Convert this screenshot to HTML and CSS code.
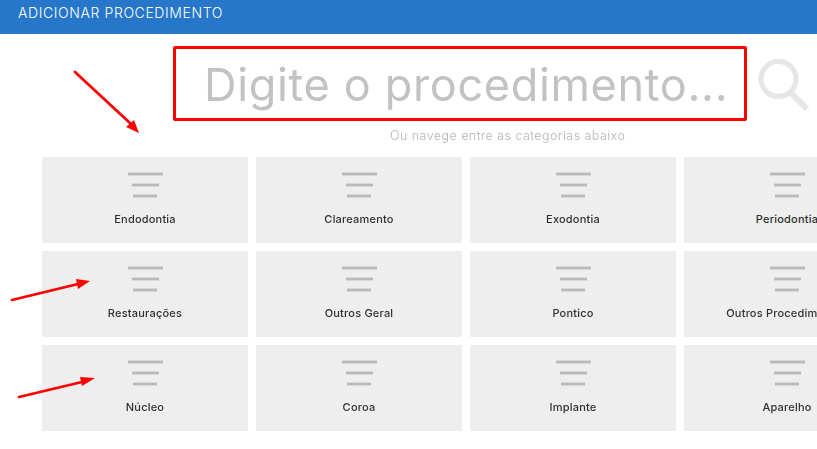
FILE: index.html
```html
<!DOCTYPE html>
<html lang="pt">
<head>
<meta charset="utf-8">
<title>Adicionar procedimento</title>
<link rel="stylesheet" href="styles.css">
</head>
<body>
<header class="topbar">ADICIONAR PROCEDIMENTO</header>
<main class="content">
  <div class="search-row">
    <div class="search-box">Digite o procedimento...</div>
    <svg class="search-icon" width="54" height="54" viewBox="0 0 54 54" fill="none" stroke="#e6e6e6">
      <circle cx="21.5" cy="20" r="17.5" stroke-width="5"/>
      <path d="M33 33 L50 50" stroke-width="6"/>
    </svg>
  </div>
  <p class="hint">Ou navege entre as categorias abaixo</p>
  <div class="grid">
    <div class="card"><span class="lines"><i class="l1"></i><i class="l2"></i><i class="l3"></i></span><span class="label">Endodontia</span></div>
    <div class="card"><span class="lines"><i class="l1"></i><i class="l2"></i><i class="l3"></i></span><span class="label">Clareamento</span></div>
    <div class="card"><span class="lines"><i class="l1"></i><i class="l2"></i><i class="l3"></i></span><span class="label">Exodontia</span></div>
    <div class="card"><span class="lines"><i class="l1"></i><i class="l2"></i><i class="l3"></i></span><span class="label">Periodontia</span></div>
    <div class="card"><span class="lines"><i class="l1"></i><i class="l2"></i><i class="l3"></i></span><span class="label">Restaurações</span></div>
    <div class="card"><span class="lines"><i class="l1"></i><i class="l2"></i><i class="l3"></i></span><span class="label">Outros Geral</span></div>
    <div class="card"><span class="lines"><i class="l1"></i><i class="l2"></i><i class="l3"></i></span><span class="label">Pontico</span></div>
    <div class="card"><span class="lines"><i class="l1"></i><i class="l2"></i><i class="l3"></i></span><span class="label">Outros Procedimentos</span></div>
    <div class="card"><span class="lines"><i class="l1"></i><i class="l2"></i><i class="l3"></i></span><span class="label">Núcleo</span></div>
    <div class="card"><span class="lines"><i class="l1"></i><i class="l2"></i><i class="l3"></i></span><span class="label">Coroa</span></div>
    <div class="card"><span class="lines"><i class="l1"></i><i class="l2"></i><i class="l3"></i></span><span class="label">Implante</span></div>
    <div class="card"><span class="lines"><i class="l1"></i><i class="l2"></i><i class="l3"></i></span><span class="label">Aparelho</span></div>
  </div>
</main>
<svg class="arrows" width="817" height="449" viewBox="0 0 817 449" fill="#ff0000" stroke="none">
  <path d="M75 72 L131 124" stroke="#ff0000" stroke-width="2.8" stroke-linecap="round"/>
  <path d="M139 133 L126 127 L134 120 Z"/>
  <path d="M12 300 L78 284" stroke="#ff0000" stroke-width="2.8" stroke-linecap="round"/>
  <path d="M90 281 L76 279 L78 289 Z"/>
  <path d="M19 397 L82 382" stroke="#ff0000" stroke-width="2.8" stroke-linecap="round"/>
  <path d="M95 378 L80 377 L82 386 Z"/>
</svg>
</body>
</html>
```

FILE: styles.css
```css
html, body {
  margin: 0;
  padding: 0;
  width: 817px;
  height: 449px;
  overflow: hidden;
  background: #ffffff;
}

body {
  position: relative;
  font-family: "Inter", "Liberation Sans", sans-serif;
}

.topbar {
  height: 34px;
  box-sizing: border-box;
  padding: 4px 0 0 18px;
  background: #2676c9;
  color: #ffffff;
  font-family: "Inter", sans-serif;
  font-weight: 300;
  font-size: 14px;
  line-height: 17px;
  letter-spacing: 0.6px;
}

.content {
  padding-top: 12px;
  will-change: opacity;
}

.search-row {
  display: flex;
  align-items: flex-start;
  padding-left: 173px;
}

.search-box {
  box-sizing: border-box;
  width: 574px;
  height: 75px;
  padding: 9px 0 0 28px;
  border: 3px solid #ff0000;
  border-radius: 2px;
  color: #c2c2c2;
  font-family: "Inter", sans-serif;
  font-weight: 400;
  font-size: 45px;
  line-height: 54px;
  letter-spacing: 0.67px;
  white-space: nowrap;
}

.search-icon {
  margin: 13px 0 0 10px;
  flex: none;
}

.hint {
  margin: 7px 0 0;
  padding-left: 390px;
  color: #b4b4b4;
  font-family: "Inter", sans-serif;
  font-weight: 300;
  font-size: 12.5px;
  line-height: 16px;
  letter-spacing: 0.45px;
}

.grid {
  display: grid;
  grid-template-columns: repeat(4, 206px);
  grid-auto-rows: 86px;
  gap: 8px;
  margin-top: 13px;
  padding-left: 42px;
}

.card {
  display: flex;
  flex-direction: column;
  align-items: center;
  background: #eeeeee;
  overflow: hidden;
}

.lines {
  display: flex;
  flex-direction: column;
  align-items: center;
  gap: 7px;
  margin-top: 15px;
}

.lines i {
  display: block;
  height: 4px;
  background: linear-gradient(to bottom, #e8e8e8, #b6b6b6 40%, #b6b6b6 60%, #e8e8e8);
}

.l1 { width: 35px; }
.l2 { width: 27px; }
.l3 { width: 24px; }

.label {
  margin-top: 14px;
  color: #303030;
  font-size: 11px;
  font-weight: 500;
  line-height: 14px;
  letter-spacing: 0.2px;
  white-space: nowrap;
}

.arrows {
  position: absolute;
  top: 0;
  left: 0;
  pointer-events: none;
}
```
